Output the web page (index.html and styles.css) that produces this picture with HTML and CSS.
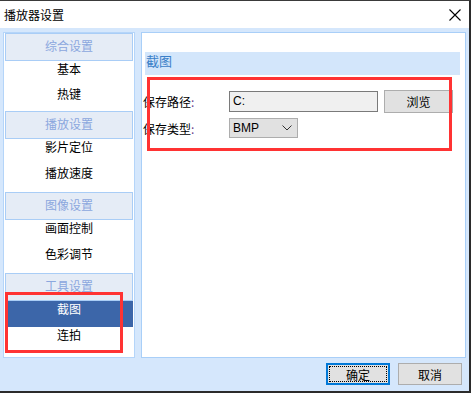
FILE: index.html
```html
<!DOCTYPE html>
<html lang="zh-CN">
<head>
    <meta charset="UTF-8">
    <title>播放器设置</title>
    <link rel="stylesheet" href="styles.css">
</head>
<body>
    <div class="window">
        <div class="titlebar">
            <span class="title">播放器设置</span>
            <svg class="close" width="12" height="12" viewBox="0 0 12 12">
                <path d="M0.5 0.5 L11.5 11.5 M11.5 0.5 L0.5 11.5" stroke="#000" stroke-width="1.1" fill="none"/>
            </svg>
        </div>

        <div class="content">
            <div class="side">
                <div class="group first">
                    <div class="group-head">综合设置</div>
                    <div class="item">基本</div>
                    <div class="item">热键</div>
                </div>
                <div class="group">
                    <div class="group-head">播放设置</div>
                    <div class="item">影片定位</div>
                    <div class="item">播放速度</div>
                </div>
                <div class="group">
                    <div class="group-head">图像设置</div>
                    <div class="item">画面控制</div>
                    <div class="item">色彩调节</div>
                </div>
                <div class="group">
                    <div class="group-head">工具设置</div>
                    <div class="item active">截图</div>
                    <div class="item">连拍</div>
                </div>
            </div>

            <div class="page">
                <div class="page-head">截图</div>
                <div class="form">
                    <div class="row">
                        <span class="label">保存路径<span class="colon">:</span></span>
                        <div class="path-input">C:</div>
                        <button class="btn browse">浏览</button>
                    </div>
                    <div class="row">
                        <span class="label">保存类型<span class="colon">:</span></span>
                        <div class="select">
                            <span>BMP</span>
                            <svg width="10" height="6" viewBox="0 0 10 6">
                                <path d="M0.5 0.5 L5 5 L9.5 0.5" stroke="#333" stroke-width="1" fill="none"/>
                            </svg>
                        </div>
                    </div>
                </div>
            </div>
        </div>

        <div class="footer">
            <button class="btn primary"><span>确定</span></button>
            <button class="btn">取消</button>
        </div>

        <!-- 标注框 -->
        <div class="mark mark-form"></div>
        <div class="mark mark-side"></div>
    </div>
</body>
</html>
```

FILE: styles.css
```css
body {
    margin: 0;
    font-family: "Noto Sans CJK SC", "Liberation Sans", sans-serif;
    font-size: 12px;
    color: #000;
}
.window {
    position: relative;
    width: 471px;
    height: 393px;
    box-sizing: border-box;
    border-top: 1px solid #3a3a3a;
    border-right: 2px solid #2b2b2b;
    border-bottom: 2px solid #2b2b2b;
    background: #d5e7fc;
    display: flex;
    flex-direction: column;
}
.titlebar {
    height: 27px;
    background: #fff;
    display: flex;
    align-items: center;
    justify-content: space-between;
    padding: 0 8px 0 4px;
}
.title {
    font-size: 12px;
}
.content {
    display: flex;
    gap: 6px;
    height: 326px;
    padding: 4px 3px 0 3px;
}
.side {
    width: 132px;
    box-sizing: border-box;
    border: 1px solid #b5d5f9;
    background: #fff;
    padding: 0 1px 1px;
}
.group {
    padding-bottom: 1px;
}
.group.first {
    padding-bottom: 0;
}
.group-head {
    height: 28px;
    box-sizing: border-box;
    border: 1px solid #a9cdf6;
    background: #e5ecf6;
    color: #8ba7de;
    text-align: center;
    line-height: 24px;
}
.item {
    height: 26px;
    line-height: 16px;
    text-align: center;
}
.group.first .item {
    height: 25px;
}
.item.active {
    background: #3c66a9;
    color: #fff;
}
.page {
    flex: 1;
    box-sizing: border-box;
    border: 1px solid #a9cff8;
    background: #fff;
    padding: 19px 5px 0 1px;
}
.page-head {
    margin-left: 2px;
    height: 23px;
    background: #d3e6fb;
    color: #3b80c8;
    font-size: 13px;
    line-height: 18px;
    padding-left: 1px;
}
.form {
    padding-top: 15px;
    display: flex;
    flex-direction: column;
    gap: 5px;
}
.row {
    display: flex;
    align-items: center;
}
.label {
    width: 86px;
}
.colon {
    color: #6b3f8c;
}
.path-input {
    width: 149px;
    height: 21px;
    box-sizing: border-box;
    border: 1px solid #7a7a7a;
    background: #f0f0f0;
    font-family: "Liberation Sans", sans-serif;
    line-height: 19px;
    padding-left: 3px;
}
.btn {
    height: 22px;
    width: 64px;
    box-sizing: border-box;
    border: 1px solid #adadad;
    background: #e1e1e1;
    font-family: "Noto Sans CJK SC", sans-serif;
    font-size: 12px;
    padding: 0;
    color: #000;
}
.browse {
    width: 69px;
    height: 23px;
    margin-left: 6px;
}
.select {
    width: 69px;
    height: 20px;
    box-sizing: border-box;
    border: 1px solid #adadad;
    background: #e1e1e1;
    font-family: "Liberation Sans", sans-serif;
    display: flex;
    align-items: center;
    justify-content: space-between;
    padding: 0 5px 0 3px;
}
.footer {
    display: flex;
    justify-content: flex-end;
    gap: 8px;
    padding: 5px 7px 0 0;
}
.primary {
    position: relative;
    border: 2px solid #0078d7;
}
.primary::after {
    content: "";
    position: absolute;
    inset: 1px;
    border: 1px dotted #000;
}
.mark {
    position: absolute;
    box-sizing: border-box;
    border: 3px solid #f33;
}
.mark-form {
    left: 147px;
    top: 76px;
    width: 305px;
    height: 74px;
}
.mark-side {
    left: 5px;
    top: 291px;
    width: 118px;
    height: 61px;
}
```
